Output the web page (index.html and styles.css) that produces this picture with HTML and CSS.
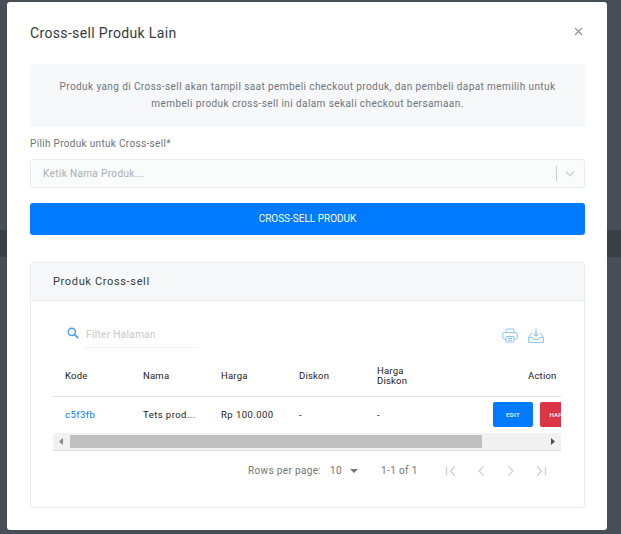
FILE: index.html
```html
<!DOCTYPE html>
<html lang="id">
<head>
<meta charset="utf-8">
<title>Cross-sell Produk Lain</title>
<link rel="stylesheet" href="styles.css">
</head>
<body>
<div class="modal">
  <header class="modal-head">
    <h2 class="modal-title">Cross-sell Produk Lain</h2>
    <svg class="close" width="9" height="9" viewBox="0 0 9 9"><path d="M1 1l7 7M8 1l-7 7" stroke="#8a9096" stroke-width="1.1" fill="none"/></svg>
  </header>
  <div class="info">Produk yang di Cross-sell akan tampil saat pembeli checkout produk, dan pembeli dapat memilih untuk<br>membeli produk cross-sell ini dalam sekali checkout bersamaan.</div>
  <label class="label">Pilih Produk untuk Cross-sell*</label>
  <div class="select">
    <span class="placeholder">Ketik Nama Produk...</span>
    <span class="sep"></span>
    <svg class="chev" width="10" height="7" viewBox="0 0 10 7"><path d="M1 1.500l4 4 4-4" stroke="#d4d6d8" stroke-width="1.600" fill="none"/></svg>
  </div>
  <button class="submit">CROSS-SELL PRODUK</button>
  <section class="card">
    <div class="card-head">Produk Cross-sell</div>
    <div class="card-body">
      <div class="toolbar">
        <svg class="search" width="12" height="12" viewBox="0 0 12 12"><circle cx="4.800" cy="4.800" r="3.600" stroke="#4b9dff" stroke-width="1.500" fill="none"/><path d="M7.600 7.600l3.600 3.600" stroke="#4b9dff" stroke-width="1.700"/></svg>
        <div class="filter">Filter Halaman</div>
        <div class="tools">
          <svg width="16" height="15" viewBox="0 0 16 15" fill="none" stroke="#8cc4f2" stroke-width="1"><rect x="4" y="1" width="8" height="3.500" rx="1"/><rect x=".6" y="4.500" width="14.800" height="6.500" rx="2"/><rect x="4" y="8.500" width="8" height="5.500" rx=".5" fill="#fff"/><path d="M6 10.500h4M6 12.200h4"/></svg>
          <svg width="16" height="15" viewBox="0 0 16 15" fill="none" stroke="#8cc4f2" stroke-width="1"><path d="M4 5.500H3L.6 9.500v4.900h14.800V9.500L13 5.500h-1"/><path d="M.6 9.500h4.200l1 2h4.400l1-2h4.200"/><path d="M8 .5v7.500M5.500 5.800L8 8.300l2.500-2.500" stroke="#6fb3ec"/></svg>
        </div>
      </div>
      <div class="table-clip">
        <table class="table">
          <thead>
            <tr><th>Kode</th><th>Nama</th><th>Harga</th><th>Diskon</th><th class="narrow">Harga Diskon</th><th class="action">Action</th></tr>
          </thead>
          <tbody>
            <tr>
              <td><a class="code">c5f3fb</a></td><td>Tets prod...</td><td>Rp 100.000</td><td>-</td><td>-</td>
              <td class="btns"><span class="btn edit">EDIT</span><span class="btn del">HAPUS</span></td>
            </tr>
          </tbody>
        </table>
      </div>
      <div class="scrollbar">
        <svg class="arrow arrow-left" width="4" height="7" viewBox="0 0 4 7"><path d="M4 0v7L0 3.500z" fill="#8b8b8b"/></svg>
        <div class="thumb"></div>
        <svg class="arrow arrow-right" width="4" height="7" viewBox="0 0 4 7"><path d="M0 0v7l4-3.500z" fill="#505050"/></svg>
      </div>
      <div class="pager">
        <span class="rows-label">Rows per page:</span>
        <span class="rows-value">10</span>
        <svg class="caret" width="8" height="4" viewBox="0 0 8 4"><path d="M0 0h8L4 4z" fill="#757575"/></svg>
        <span class="range">1-1 of 1</span>
        <div class="pages">
          <svg width="12" height="12" viewBox="0 0 12 12"><path d="M1.500 1.500v9M10 1.500L5.500 6l4.500 4.500" stroke="#d2d2d2" stroke-width="1.400" fill="none"/></svg>
          <svg width="12" height="12" viewBox="0 0 12 12"><path d="M8.500 1.500L4 6l4.500 4.500" stroke="#d2d2d2" stroke-width="1.400" fill="none"/></svg>
          <svg width="12" height="12" viewBox="0 0 12 12"><path d="M3.500 1.500L8 6l-4.500 4.500" stroke="#d2d2d2" stroke-width="1.400" fill="none"/></svg>
          <svg width="12" height="12" viewBox="0 0 12 12"><path d="M10.500 1.500v9M2 1.500L6.500 6 2 10.500" stroke="#d2d2d2" stroke-width="1.400" fill="none"/></svg>
        </div>
      </div>
    </div>
  </section>
</div>
</body>
</html>
```
FILE: styles.css
```css
* { box-sizing: border-box; }
html, body { height: 100%; }
body {
  margin: 0;
  overflow: hidden;
  padding: 2px 14px 4px 7px;
  font-family: Roboto, "Liberation Sans", sans-serif;
  background: linear-gradient(#484e57 0 230px, #3b4048 230px 257px, #484e57 257px);
}
.modal {
  width: 600px;
  height: 528px;
  background: #fff;
  border-radius: 3px;
  padding: 0 22px 0 23px;
}
.modal-head { height: 62px; display: flex; align-items: flex-start; justify-content: space-between; }
.modal-title {
  margin: 22px 0 0;
  font-size: 14px;
  line-height: 18px;
  font-weight: 400;
  letter-spacing: .35px;
  color: #343a40;
}
.close { margin: 25px 2px 0 0; }
.info {
  height: 63px;
  background: #f7f8fa;
  border-radius: 3px;
  padding: 14px 10px 0;
  text-align: center;
  font-size: 10px;
  line-height: 17px;
  letter-spacing: .41px;
  color: #6c757d;
}
.label {
  display: block;
  margin-top: 10px;
  font-size: 10px;
  line-height: 14px;
  letter-spacing: .32px;
  color: #6c757d;
}
.select {
  margin-top: 8px;
  height: 29px;
  display: flex;
  align-items: center;
  background: #fafbfb;
  border: 1px solid #e9ecef;
  border-radius: 3px;
  padding: 0 9px 0 12px;
}
.placeholder { flex: 1; font-size: 10px; letter-spacing: .37px; color: #a9adb1; }
.sep { width: 1px; height: 15px; background: #ccc; margin-right: 8px; }
.submit {
  display: block;
  width: 100%;
  height: 32px;
  margin-top: 15px;
  padding: 0 0 1px;
  border: 0;
  border-radius: 3px;
  background: #007bff;
  color: #fff;
  font: 400 10px Roboto, "Liberation Sans", sans-serif;
}
.card {
  height: 246px;
  margin-top: 27px;
  border: 1px solid #e9ecef;
  border-radius: 3px;
}
.card-head {
  height: 38px;
  padding-left: 22px;
  background: #f7f8fa;
  border-bottom: 1px solid #e6eaee;
  font-size: 11px;
  line-height: 38px;
  letter-spacing: .65px;
  color: #343a40;
}
.card-body { padding: 0 23px 0 22px; }
.toolbar { height: 51px; display: flex; align-items: flex-start; position: relative; }
.search { margin: 26px 0 0 14px; }
.filter {
  width: 115px;
  height: 22px;
  margin: 25px 0 0 4px;
  padding-left: 3px;
  border-bottom: 1px solid #f3f3f3;
  font-size: 10px;
  line-height: 17px;
  letter-spacing: .35px;
  color: #c8c8c8;
}
.tools { margin: 27px 17px 0 auto; display: flex; gap: 10px; }
.table-clip { width: 508px; overflow: hidden; }
.table { width: 630px; table-layout: fixed; border-collapse: collapse; font-size: 9.500px; letter-spacing: .45px; color: #1c1c1c; }
.table th { height: 44px; padding: 5px 12px 0; text-align: left; font-weight: 400; line-height: 10px; letter-spacing: .2px; border-bottom: 1px solid #e3e3e3; }
.table th:nth-child(-n+5), .table td:nth-child(-n+5) { width: 78px; }
.table th.narrow { padding-right: 30px; }
.table th.action { padding-left: 85px; }
.table td { height: 36px; padding: 0 12px; white-space: nowrap; }
.code { color: #007bff; }
.table td.btns { padding-left: 50px; }
.btns { display: flex; gap: 7px; align-items: center; }
.btn {
  flex: none;
  display: block;
  width: 40px;
  height: 25px;
  border-radius: 2px;
  color: #fff;
  font-size: 6px;
  font-weight: 500;
  line-height: 25px;
  text-align: center;
  letter-spacing: .3px;
}
.edit { background: #007bff; }
.del { background: #dc3545; }
.scrollbar {
  width: 508px;
  height: 18px;
  display: flex;
  align-items: center;
  background: #f1f1f1;
  border-bottom: 1px solid #e0e0e0;
  padding: 2px 0 1px;
}
.arrow { flex: none; }
.arrow-left { margin: 0 7px 0 6px; }
.arrow-right { margin-right: 6px; }
.thumb { height: 13px; width: 412px; margin-right: auto; background: #bfbfbf; }
.pager { height: 40px; display: flex; align-items: center; font-size: 10px; letter-spacing: .35px; color: #757575; }
.rows-label { margin-left: 195px; }
.rows-value { margin-left: 9px; }
.caret { margin-left: 8px; }
.range { margin-left: 23px; }
.pages { display: flex; gap: 18px; margin-left: 27px; }
```
